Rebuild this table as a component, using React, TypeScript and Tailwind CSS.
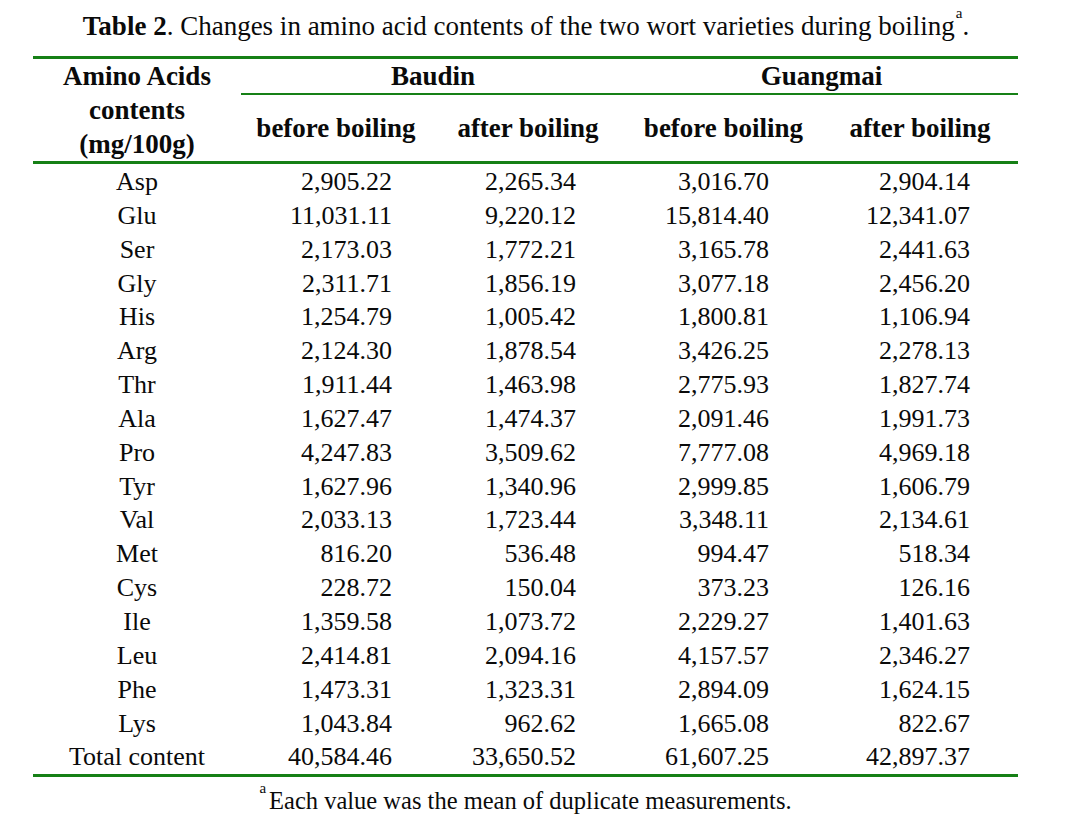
import React from "react";

const rows: [string, string, string, string, string][] = [
  ["Asp", "2,905.22", "2,265.34", "3,016.70", "2,904.14"],
  ["Glu", "11,031.11", "9,220.12", "15,814.40", "12,341.07"],
  ["Ser", "2,173.03", "1,772.21", "3,165.78", "2,441.63"],
  ["Gly", "2,311.71", "1,856.19", "3,077.18", "2,456.20"],
  ["His", "1,254.79", "1,005.42", "1,800.81", "1,106.94"],
  ["Arg", "2,124.30", "1,878.54", "3,426.25", "2,278.13"],
  ["Thr", "1,911.44", "1,463.98", "2,775.93", "1,827.74"],
  ["Ala", "1,627.47", "1,474.37", "2,091.46", "1,991.73"],
  ["Pro", "4,247.83", "3,509.62", "7,777.08", "4,969.18"],
  ["Tyr", "1,627.96", "1,340.96", "2,999.85", "1,606.79"],
  ["Val", "2,033.13", "1,723.44", "3,348.11", "2,134.61"],
  ["Met", "816.20", "536.48", "994.47", "518.34"],
  ["Cys", "228.72", "150.04", "373.23", "126.16"],
  ["Ile", "1,359.58", "1,073.72", "2,229.27", "1,401.63"],
  ["Leu", "2,414.81", "2,094.16", "4,157.57", "2,346.27"],
  ["Phe", "1,473.31", "1,323.31", "2,894.09", "1,624.15"],
  ["Lys", "1,043.84", "962.62", "1,665.08", "822.67"],
  ["Total content", "40,584.46", "33,650.52", "61,607.25", "42,897.37"],
];

export default function App() {
  return (
    <div
      className="w-[1080px] h-[831px] bg-white text-[#0a0a0a] overflow-hidden"
      style={{ fontFamily: '"Liberation Serif", "Times New Roman", serif' }}
    >
      <div className="pt-[11px] text-center text-[27px] leading-[30px] w-[1052px]">
        <span className="font-bold">Table 2</span>. Changes in amino acid contents of the two wort varieties during boiling
        <sup className="text-[15px] align-[10px] ml-[1px]">a</sup>.
      </div>

      <div className="ml-[33px] mt-[15px] w-[985px] border-t-[3px] border-b-[3px] border-[#168016]">
        <div className="grid grid-cols-[208px_384px_393px] grid-rows-[34px_2px_66px] border-b-[3px] border-[#168016] font-bold text-[27px]">
          <div className="row-span-3 flex flex-col items-center leading-[34px]">
            <span>Amino Acids</span>
            <span>contents</span>
            <span>(mg/100g)</span>
          </div>
          <div className="flex items-center justify-center leading-[34px]">Baudin</div>
          <div className="flex items-center justify-center leading-[34px]">Guangmai</div>
          <div className="col-span-2 bg-[#168016]" />
          <div className="grid grid-cols-[190px_194px] items-center text-center">
            <span>before boiling</span>
            <span>after boiling</span>
          </div>
          <div className="grid grid-cols-[197px_196px] items-center text-center">
            <span>before boiling</span>
            <span>after boiling</span>
          </div>
        </div>
        <div className="text-[26px] pt-[1px]">
          {rows.map((r) => (
            <div key={r[0]} className="grid grid-cols-[208px_190px_194px_197px_196px] h-[33.85px] leading-[33.85px]">
              <div className="text-center">{r[0]}</div>
              <div className="text-right pr-[39px]">{r[1]}</div>
              <div className="text-right pr-[49px]">{r[2]}</div>
              <div className="text-right pr-[53px]">{r[3]}</div>
              <div className="text-right pr-[48px]">{r[4]}</div>
            </div>
          ))}
        </div>
      </div>

      <div className="mt-[9px] text-center text-[24.5px] leading-[30px] w-[1051px]">
        <sup className="text-[15px] align-[9px] mr-[3px]">a</sup>Each value was the mean of duplicate measurements.
      </div>
    </div>
  );
}
